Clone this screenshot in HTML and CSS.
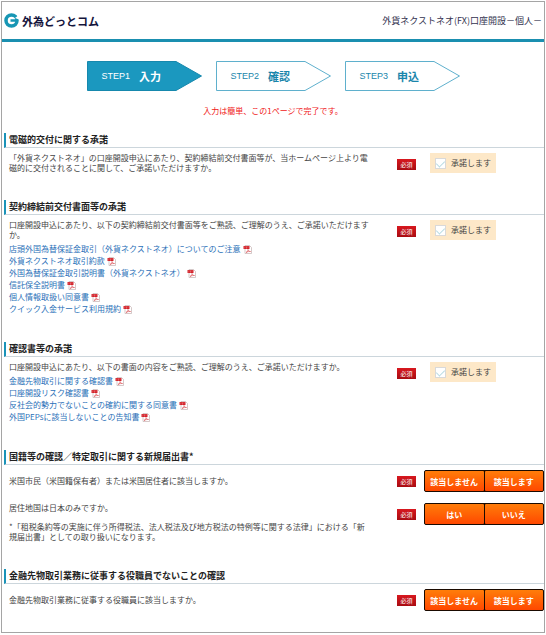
FILE: index.html
```
<!DOCTYPE html>
<html lang="ja">
<head>
    <meta charset="UTF-8">
    <meta name="viewport" content="width=device-width, initial-scale=1.0">
    <title>外貨ネクストネオ(FX)口座開設－個人－</title>
    <link rel="stylesheet" href="styles.css">
</head>
<body>

    <svg class="symbols" aria-hidden="true">
        <symbol id="pdf" viewBox="0 0 18 18">
            <path d="M4 1h9l4 4v12H4z" fill="#fff" stroke="#c4b2b2" stroke-width="1.4"/>
            <path d="M1 2h12v6H1z" fill="#d3222a"/>
            <path d="M3 4h2M6 4h2M9 4h2M3 6h1M6 6h2" stroke="#f5b5b5"/>
            <path d="M6 15c3-1 4-4 4-6 1 3 3 4 5 4-3 0-6 0-9 2z" fill="none" stroke="#dd5a5f" stroke-width="1.4"/>
        </symbol>
    </svg>

    <div class="page">
        <header class="header">
            <div class="logo">
                <svg class="logo-mark" viewBox="0 0 30 30" aria-hidden="true">
                    <circle cx="15" cy="15" r="11" fill="none" stroke="#1796b4" stroke-width="7"/>
                    <path d="M22 10l8-6v9z" fill="#fff"/>
                    <path d="M13 15h13" stroke="#1796b4" stroke-width="5"/>
                </svg>
                <span>外為どっとコム</span>
            </div>
            <h1 class="page-title">外貨ネクストネオ(FX)口座開設－個人－</h1>
        </header>

        <main>
            <ol class="steps">
                <li class="step step-current">
                    <svg class="step-shape" viewBox="0 0 115 30" aria-hidden="true"><path d="M.5.5H89L114.500 15 89 29.500H.5z"/></svg>
                    <span class="step-no">STEP1</span><span class="step-name">入力</span>
                </li>
                <li class="step">
                    <svg class="step-shape" viewBox="0 0 115 30" aria-hidden="true"><path d="M.5.5H89L114.500 15 89 29.500H.5z"/></svg>
                    <span class="step-no">STEP2</span><span class="step-name">確認</span>
                </li>
                <li class="step">
                    <svg class="step-shape" viewBox="0 0 115 30" aria-hidden="true"><path d="M.5.5H89L114.500 15 89 29.500H.5z"/></svg>
                    <span class="step-no">STEP3</span><span class="step-name">申込</span>
                </li>
            </ol>
            <p class="lead">入力は簡単、この1ページで完了です。</p>

            <form>
                <section class="section">
                    <h2>電磁的交付に関する承諾</h2>
                    <div class="row">
                        <div class="question">
                            <p>「外貨ネクストネオ」の口座開設申込にあたり、契約締結前交付書面等が、当ホームページ上より電磁的に交付されることに関して、ご承諾いただけますか。</p>
                        </div>
                        <span class="required">必須</span>
                        <div class="answer">
                            <label class="agree"><input type="checkbox" name="agree_delivery">承諾します</label>
                        </div>
                    </div>
                </section>

                <section class="section">
                    <h2>契約締結前交付書面等の承諾</h2>
                    <div class="row">
                        <div class="question">
                            <p>口座開設申込にあたり、以下の契約締結前交付書面等をご熟読、ご理解のうえ、ご承諾いただけますか。</p>
                            <ul class="docs">
                                <li><a href="#">店頭外国為替保証金取引（外貨ネクストネオ）についてのご注意<svg class="pdf"><use href="#pdf"/></svg></a></li>
                                <li><a href="#">外貨ネクストネオ取引約款<svg class="pdf"><use href="#pdf"/></svg></a></li>
                                <li><a href="#">外国為替保証金取引説明書（外貨ネクストネオ）<svg class="pdf"><use href="#pdf"/></svg></a></li>
                                <li><a href="#">信託保全説明書<svg class="pdf"><use href="#pdf"/></svg></a></li>
                                <li><a href="#">個人情報取扱い同意書<svg class="pdf"><use href="#pdf"/></svg></a></li>
                                <li><a href="#">クイック入金サービス利用規約<svg class="pdf"><use href="#pdf"/></svg></a></li>
                            </ul>
                        </div>
                        <span class="required">必須</span>
                        <div class="answer">
                            <label class="agree"><input type="checkbox" name="agree_contract">承諾します</label>
                        </div>
                    </div>
                </section>

                <section class="section">
                    <h2>確認書等の承諾</h2>
                    <div class="row">
                        <div class="question">
                            <p>口座開設申込にあたり、以下の書面の内容をご熟読、ご理解のうえ、ご承諾いただけますか。</p>
                            <ul class="docs">
                                <li><a href="#">金融先物取引に関する確認書<svg class="pdf"><use href="#pdf"/></svg></a></li>
                                <li><a href="#">口座開設リスク確認書<svg class="pdf"><use href="#pdf"/></svg></a></li>
                                <li><a href="#">反社会的勢力でないことの確約に関する同意書<svg class="pdf"><use href="#pdf"/></svg></a></li>
                                <li><a href="#">外国PEPsに該当しないことの告知書<svg class="pdf"><use href="#pdf"/></svg></a></li>
                            </ul>
                        </div>
                        <span class="required">必須</span>
                        <div class="answer">
                            <label class="agree"><input type="checkbox" name="agree_confirm">承諾します</label>
                        </div>
                    </div>
                </section>

                <section class="section">
                    <h2>国籍等の確認／特定取引に関する新規届出書*</h2>
                    <div class="row row-choice">
                        <div class="question">
                            <p>米国市民（米国籍保有者）または米国居住者に該当しますか。</p>
                        </div>
                        <span class="required">必須</span>
                        <div class="choice">
                            <button type="button">該当しません</button>
                            <button type="button">該当します</button>
                        </div>
                    </div>
                    <div class="row row-choice row-next">
                        <div class="question">
                            <p>居住地国は日本のみですか。</p>
                            <p class="note">*「租税条約等の実施に伴う所得税法、法人税法及び地方税法の特例等に関する法律」における「新規届出書」としての取り扱いになります。</p>
                        </div>
                        <span class="required">必須</span>
                        <div class="choice">
                            <button type="button">はい</button>
                            <button type="button">いいえ</button>
                        </div>
                    </div>
                </section>

                <section class="section section-last">
                    <h2>金融先物取引業務に従事する役職員でないことの確認</h2>
                    <div class="row row-choice">
                        <div class="question">
                            <p>金融先物取引業務に従事する役職員に該当しますか。</p>
                        </div>
                        <span class="required">必須</span>
                        <div class="choice">
                            <button type="button">該当しません</button>
                            <button type="button">該当します</button>
                        </div>
                    </div>
                </section>
            </form>
        </main>
    </div>

</body>
</html>
```
FILE: styles.css
```
* {
    box-sizing: border-box;
}

body {
    margin: 1px;
    background-color: #fff;
    color: #444;
    font-family: "Noto Sans CJK JP", sans-serif;
    font-size: 8px;
    line-height: 10px;
}

h1, h2, p, ol, ul {
    margin: 0;
    padding: 0;
}

ol, ul {
    list-style: none;
}

.symbols {
    display: none;
}

.page {
    border: 1px solid #a5a5a5;
}

/* Header */
.header {
    display: flex;
    align-items: center;
    justify-content: space-between;
    height: 40px;
    padding: 0 2px;
    border-bottom: 3px solid #1a8fb0;
}

.logo {
    display: flex;
    align-items: center;
    gap: 3px;
    color: #14143c;
    font-size: 11px;
    font-weight: bold;
}

.logo-mark {
    width: 15px;
    height: 15px;
}

.page-title {
    color: #33334f;
    font-size: 9px;
    font-weight: normal;
}

/* Steps */
.steps {
    display: flex;
    justify-content: center;
    gap: 14px;
    margin-top: 19px;
}

.step {
    position: relative;
    display: flex;
    align-items: center;
    gap: 9px;
    width: 115px;
    height: 30px;
    padding-left: 15px;
    color: #1a86ab;
}

.step-shape {
    position: absolute;
    left: 0;
    top: 0;
    width: 100%;
    height: 100%;
    fill: #fff;
    stroke: #5fb0cd;
}

.step-current {
    color: #fff;
}

.step-current .step-shape {
    fill: #1b98bf;
    stroke: #1688ad;
}

.step-no,
.step-name {
    position: relative;
}

.step-no {
    font-family: "Liberation Sans", Arial, sans-serif;
    font-size: 9px;
}

.step-name {
    font-size: 11px;
    font-weight: bold;
}

.lead {
    margin: 15px 0 17px;
    color: #f01818;
    text-align: center;
}

/* Sections */
.section {
    margin-left: 2px;
    padding-bottom: 27px;
}

.section-last {
    padding-bottom: 21px;
}

.section h2 {
    height: 15px;
    padding-left: 3px;
    border-left: 2px solid #1a93b8;
    border-bottom: 1px solid #ccd6dc;
    color: #222;
    font-size: 9px;
    line-height: 14px;
}

.row {
    display: flex;
    align-items: flex-start;
    padding: 5px 0 0 5px;
}

.row-next {
    padding-top: 11px;
}

.question {
    flex: 1;
    margin-right: 26px;
}

.row-choice .question {
    padding-top: 6px;
}

.row-next .question {
    padding-top: 0;
}

.note {
    margin-top: 9px;
}

.docs {
    margin-top: 3px;
    line-height: 12px;
}

.docs a {
    display: inline-flex;
    align-items: center;
    gap: 2px;
    color: #2a70b8;
    text-decoration: none;
    vertical-align: top;
}

.docs a:hover {
    text-decoration: underline;
}

.pdf {
    width: 9px;
    height: 9px;
}

.required {
    width: 19px;
    height: 11px;
    margin: 6px 8px 0 0;
    background-image: linear-gradient(#d8181f, #a80c12);
    color: #fff;
    font-size: 6px;
    line-height: 11px;
    text-align: center;
}

.answer {
    width: 120px;
    padding-left: 6px;
}

.agree {
    display: inline-flex;
    align-items: center;
    gap: 5px;
    height: 20px;
    padding: 0 5px;
    background-color: #fde8c8;
    vertical-align: top;
}

.agree input {
    appearance: none;
    display: flex;
    justify-content: center;
    width: 11px;
    height: 11px;
    margin: 0;
    border: 1px solid #d9d9d9;
    background-color: #fff;
}

.agree input::after {
    content: "";
    width: 4px;
    height: 7px;
    border: solid #b8dbe3;
    border-width: 0 1px 1px 0;
    transform: rotate(45deg);
}

.agree input:checked::after {
    border-color: #1a93b8;
}

.choice {
    display: flex;
    width: 120px;
    border: 1px solid #1a0a00;
    border-radius: 2px;
    background-color: #1a0a00;
    gap: 1px;
}

.choice button {
    flex: 1;
    height: 20px;
    padding: 0;
    border: 0;
    border-radius: 1px;
    background-image: linear-gradient(#ff7d0a, #ff4800);
    color: #fff;
    font-family: inherit;
    font-size: 8px;
    font-weight: bold;
    cursor: pointer;
}
```
